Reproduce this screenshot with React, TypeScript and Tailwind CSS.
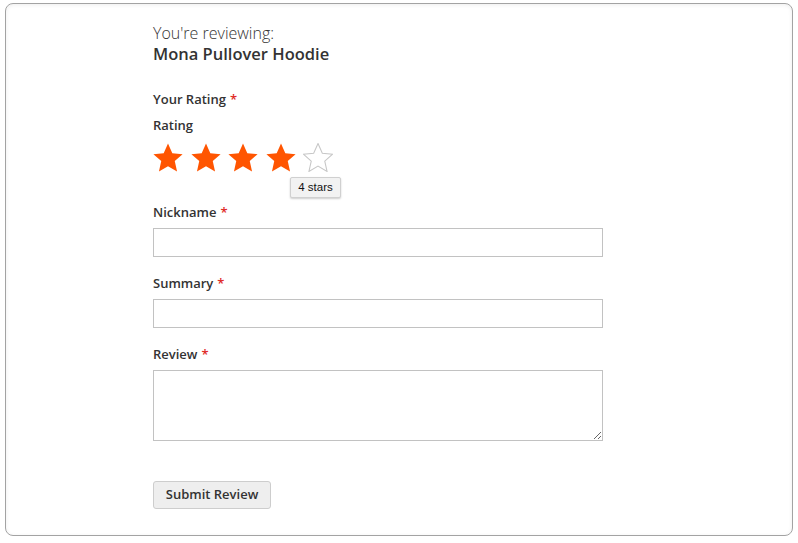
const STAR = "M12 1.6l3.2 7.1 7.6.7-5.8 5.1 1.7 7.6L12 18.2l-6.7 3.9 1.7-7.6-5.8-5.1 7.6-.7z"

function Star({ filled }: { filled: boolean }) {
  return (
    <svg width="30" height="29" viewBox="0.9 1.2 22.2 21.3" preserveAspectRatio="none" className="shrink-0">
      <path
        d={STAR}
        fill={filled ? "#ff5501" : "none"}
        stroke={filled ? "none" : "#c7c7c7"}
        strokeWidth={filled ? 0 : 0.8}
        strokeLinejoin="miter"
      />
    </svg>
  )
}

function Label({ text, required = true }: { text: string; required?: boolean }) {
  return (
    <div className="text-[13px] font-semibold leading-[18px] text-[#333]">
      {text}
      {required && <span className="ml-[4px] text-[#e02b27]">*</span>}
    </div>
  )
}

export default function App() {
  return (
    <div className="w-[798px] h-[543px] bg-white pt-[3px] pl-[5px] font-['Open_Sans',sans-serif]">
      <div className="w-[788px] h-[533px] border border-[#a3a3a3] rounded-[8px] shadow-[inset_0_1px_4px_rgba(0,0,0,0.07)] bg-white">
        <div className="pl-[147px] pt-[20px]">
          <div className="text-[16px] font-light leading-[19px] text-[#333]">You're reviewing:</div>
          <div className="text-[16.5px] font-semibold leading-[22px] text-[#333]">Mona Pullover Hoodie</div>

          <div className="mt-[25px]">
            <Label text="Your Rating" />
          </div>
          <div className="mt-[8px]">
            <Label text="Rating" required={false} />
          </div>

          <div className="relative mt-[9px] flex gap-[7.5px]">
            <Star filled />
            <Star filled />
            <Star filled />
            <Star filled />
            <Star filled={false} />
            <div className="absolute left-[137px] top-[34px] h-[21px] w-[51px] flex items-center justify-center bg-[#f2f2f2] border border-[#d0d0d0] rounded-[2px] shadow-[0_1px_2px_rgba(0,0,0,0.2)] text-[11.5px] text-[#111] font-['Liberation_Sans',sans-serif]">
              4 stars
            </div>
          </div>

          <div className="mt-[31px]">
            <Label text="Nickname" />
          </div>
          <input className="mt-[7px] block w-[450px] h-[29px] border border-[#c2c2c2] bg-white outline-none" />

          <div className="mt-[17px]">
            <Label text="Summary" />
          </div>
          <input className="mt-[7px] block w-[450px] h-[29px] border border-[#c2c2c2] bg-white outline-none" />

          <div className="mt-[17px]">
            <Label text="Review" />
          </div>
          <textarea className="mt-[7px] block w-[450px] h-[71px] border border-[#c2c2c2] bg-white outline-none resize" />

          <button className="mt-[40px] h-[28px] w-[118px] rounded-[3px] border border-[#cdcdcd] bg-[#eeeeee] text-[13px] font-semibold text-[#333]">
            Submit Review
          </button>
        </div>
      </div>
    </div>
  )
}
